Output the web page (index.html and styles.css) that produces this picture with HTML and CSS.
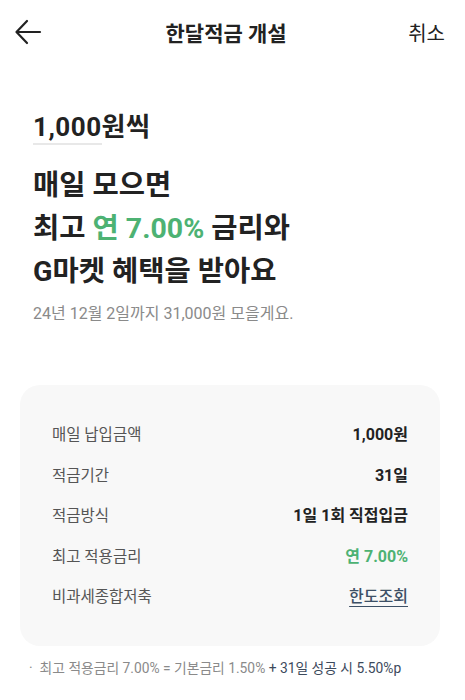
FILE: index.html
```html
<!DOCTYPE html>
<html lang="ko">
<head>
<meta charset="UTF-8">
<meta name="viewport" content="width=device-width, initial-scale=1.0">
<title>한달적금 개설</title>
<link rel="stylesheet" href="styles.css">
</head>
<body>
<div class="header">
    <button class="back" aria-label="뒤로">
        <svg width="28" height="28" viewBox="0 0 28 28" fill="none" stroke="#222" stroke-width="2.2" stroke-linecap="round" stroke-linejoin="round">
            <path d="M26 14H3"/>
            <path d="M13 3L2.5 14L13 25"/>
        </svg>
    </button>
    <h1 class="title">한달적금 개설</h1>
    <button class="cancel">취소</button>
</div>

<div class="intro">
    <div class="amount"><span class="amount-num">1,000</span>원씩</div>
    <h2 class="headline">
        매일 모으면<br>
        최고 <span class="green">연 7.00%</span> 금리와<br>
        G마켓 혜택을 받아요
    </h2>
    <p class="sub">24년 12월 2일까지 31,000원 모을게요.</p>
</div>

<div class="card">
    <div class="row">
        <span class="label">매일 납입금액</span>
        <span class="value">1,000원</span>
    </div>
    <div class="row">
        <span class="label">적금기간</span>
        <span class="value">31일</span>
    </div>
    <div class="row">
        <span class="label">적금방식</span>
        <span class="value">1일 1회 직접입금</span>
    </div>
    <div class="row">
        <span class="label">최고 적용금리</span>
        <span class="value green">연 7.00%</span>
    </div>
    <div class="row">
        <span class="label">비과세종합저축</span>
        <a class="value link" href="#">한도조회</a>
    </div>
</div>

<p class="note"><span class="dot">·</span>최고 적용금리 7.00% = 기본금리 1.50% <span class="note-strong">+ 31일 성공 시 5.50%p</span></p>
</body>
</html>
```

FILE: styles.css
```css
body {
    font-family: Roboto, "Noto Sans CJK KR", sans-serif;
    background-color: #fff;
    color: #222;
    margin: 0;
    padding: 0;
}

.header {
    display: flex;
    align-items: center;
    justify-content: space-between;
    height: 64px;
    padding: 0 20px 0 14px;
}

.back,
.cancel {
    background: none;
    border: none;
    padding: 0;
    cursor: pointer;
    font-family: inherit;
}

.back {
    display: flex;
    width: 30px;
    height: 30px;
    align-items: center;
}

.title {
    margin: 0;
    font-size: 21px;
    font-weight: 700;
    color: #222;
}

.cancel {
    font-size: 20px;
    color: #222;
}

.intro {
    padding: 45px 33px 0;
}

.amount {
    font-size: 26px;
    font-weight: 700;
    line-height: 36px;
    letter-spacing: 0.5px;
}

.amount-num {
    border-bottom: 2px solid #e8e8e8;
    padding-bottom: 1px;
}

.headline {
    margin: 19px 0 0;
    font-size: 28.5px;
    font-weight: 700;
    line-height: 43px;
    color: #222;
}

.green {
    color: #4db273;
}

.sub {
    margin: 7px 0 0;
    font-size: 16px;
    color: #8a8a8a;
}

.card {
    margin: 61px 25px 0 20px;
    padding: 28px 32px 30px;
    background-color: #f8f8f8;
    border-radius: 20px;
}

.row {
    display: flex;
    justify-content: space-between;
    align-items: center;
    height: 40.5px;
}

.label {
    font-size: 15.5px;
    color: #555;
}

.value {
    font-size: 16px;
    font-weight: 700;
    color: #222;
}

.value.green {
    color: #4db273;
}

.link {
    font-weight: 500;
    color: #3d5066;
    text-decoration: underline;
    text-underline-offset: 4px;
}

.note {
    margin: 11px 0 0 29px;
    font-size: 13.8px;
    color: #8a8a8a;
}

.dot {
    margin-right: 7px;
}

.note-strong {
    color: #3d4a5c;
}
```
